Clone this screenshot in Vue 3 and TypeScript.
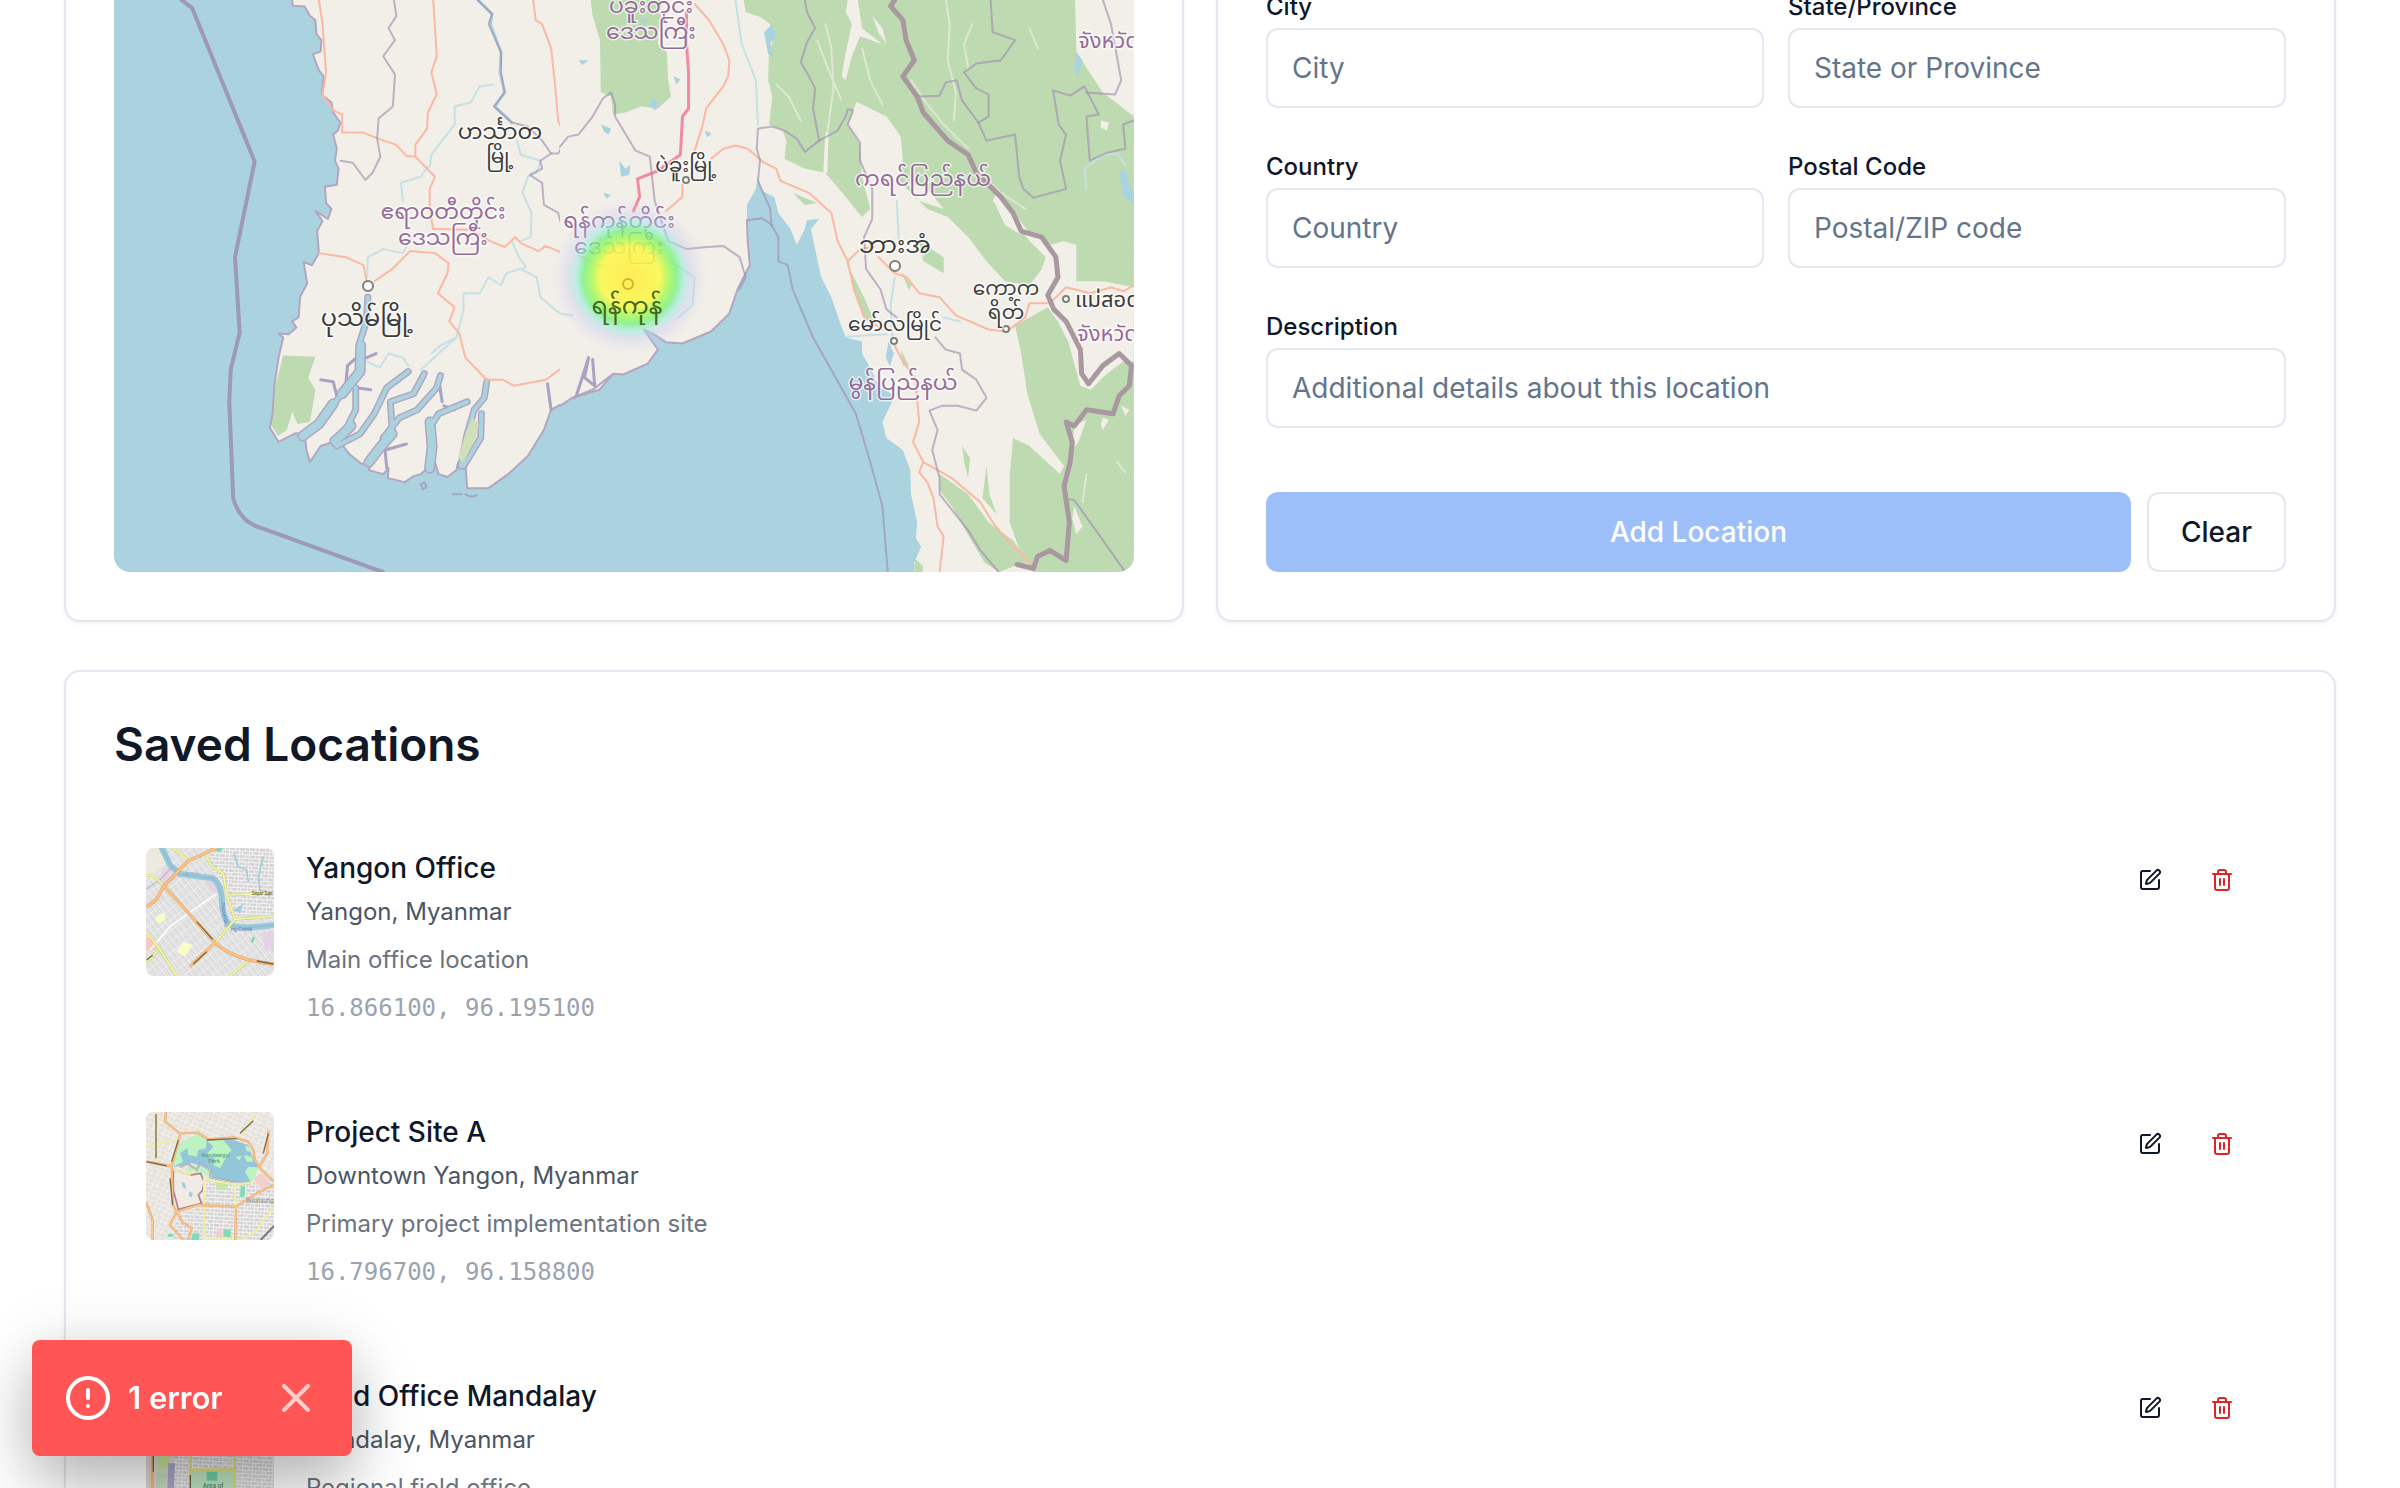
<script setup lang="ts">
import { ref } from 'vue'

interface Shape {
  d: string
  fill?: string
  stroke?: string
  width?: number
}

interface ThumbLabel {
  x: number
  y: number
  size: number
  color: string
  text: string
  turn?: number
}

interface SavedLocation {
  id: number
  name: string
  address: string
  description: string
  lat: number
  lng: number
  viewBox: string
  base: string
  shapes: Shape[]
  labels: ThumbLabel[]
}

interface MapLabel {
  x: number
  y: number
  text: string
  kind: 'region' | 'town'
  size: number
  start?: boolean
}

const form = ref({ city: '', state: '', country: '', postal: '', description: '' })
const toastOpen = ref(true)

const coastWest =
  'M650,0 652,14 685,16 700,40 715,50 718,85 732,100 730,128 708,135 725,175 738,190 733,235 760,255 765,280 785,305 778,325 765,335 775,370 770,400 780,420 775,460 742,465 745,505 760,520 750,545 715,525 735,550 720,575 725,630 705,660 682,652 692,705 672,740 668,790 650,800 662,815 640,832 612,830 625,840 612,890 600,960 595,1030 588,1065 612,1100 660,1078 685,1080 690,1120 700,1150 730,1110 780,1095 810,1130 845,1155 870,1150 865,1170 905,1180 920,1165 918,1190 965,1200 990,1185 1010,1180 1030,1165 1030,1130 1050,1150 1060,1180 1085,1187 1110,1170 1115,1150 1135,1150 1140,1215 1200,1215 1255,1180 1310,1135 1355,1070 1375,1020 1435,990 1510,970 1550,930'
const coastEast =
  'M0,1010 30,990 80,970 131,930 155,932 215,905 240,870 205,820 235,835 260,852 300,855 370,825 415,780 435,720 465,660 460,600 458,550'
const gulfShore =
  ' L458,510 480,470 485,440 495,475 525,490 535,530 565,570 580,610 600,570 605,548 635,545 615,570 625,620 640,690 665,740 685,800 700,840 740,850 740,880 760,915 780,960 820,985 790,1050 800,1090 840,1120 858,1170 860,1230 875,1300 872,1340 885,1360 868,1400 868,1424'

const channels = [
  'M862,740 858,800 840,850 845,920 780,990 725,1055 690,1078',
  'M828,965 828,1020 800,1070 765,1095',
  'M975,925 915,965 880,1030 840,1080 775,1110',
  'M1020,930 990,980 925,1000 930,1070 865,1155',
  'M1065,935 1055,965 1000,1020 950,1040 905,1090',
  'M1140,1000 1060,1030 1032,1070 1040,1110 1035,1170',
  'M1195,950 1188,990 1160,1020 1140,1080 1122,1160',
  'M1180,1030 1178,1090 1130,1160',
]
const estuaries = [
  'M842,860 840,925 790,980',
  'M765,1005 725,1055 680,1085',
  'M930,1080 895,1115 865,1150',
  'M1036,1050 1042,1110 1035,1165',
  'M815,1060 770,1098',
]
const creeks = [
  'M1365,955 1375,1020',
  'M1475,900 1455,960 1440,990',
  'M1490,895 1490,930 1470,980',
  'M970,1105 910,1120 915,1165',
  'M730,945 765,950 775,985 800,960 805,910 830,890',
  'M845,895 885,880M830,965 870,970M1075,1010 1105,1020M1060,940 1070,1000',
]

const westRoads = [
  'M725,0 735,60 745,180 735,235 765,275 790,285 790,330 850,330 890,345 940,360 970,388 995,390 1050,440 1035,470 1035,520 1045,570',
  'M1045,0 1050,70 1055,140 1040,180 1055,235 1030,280 1028,320 995,360 995,390',
  'M1325,0 1332,50 1350,60 1375,120 1385,200 1395,300 1425,360 1430,395 1460,430 1490,465 1490,520',
  'M725,630 800,640 850,660 858,700',
  'M880,700 930,670 980,625 1050,630 1088,655 1085,680 1058,730 1105,765 1090,800 1118,830 1135,890 1195,945 1240,945 1270,960 1360,945 1430,900 1510,875',
  'M1045,570 1150,572 1205,600 1245,615 1275,590 1290,605 1340,625 1360,612 1420,635 1460,635',
]
const eastRoads = [
  'M330,10 365,50 400,110 415,150 412,190 400,215 358,270 350,310 330,375',
  'M370,395 400,370 430,362 460,370 500,405 530,420 540,450 610,480 665,530 680,600 705,650 720,720 745,790 790,820',
  'M705,650 735,620 770,615',
  'M780,640 820,680 850,690 880,730 930,740 970,785 1050,820 1095,825 1140,790 1150,755 1200,755 1240,715 1300,730 1350,715 1380,725 1406,710',
  'M820,860 840,900 870,940 880,1050 865,1100 890,1150 960,1190 1030,1250 1060,1300 1100,1350 1165,1415',
  'M890,1150 880,1175 900,1200 915,1240 925,1310 940,1335 930,1424',
  'M300,460 300,490 260,525',
  'M45,635 105,665',
]
const westBorders = [
  'M935,0 942,40 920,70 938,100 905,140 938,185 932,265 892,295 888,345 897,390 875,430 855,448 820,405 785,400',
  'M1170,0 1210,35 1200,60 1235,130 1235,180 1245,230 1215,265 1265,305 1310,315 1350,350 1375,382 1395,382 1420,345 1460,330 1490,290 1520,240 1545,235 1560,280',
  'M1375,382 1345,400 1350,420 1315,435 1350,455 1355,510 1395,530 1410,580 1430,650 1425,690 1445,730 1420,770 1440,830 1420,860 1470,890 1550,925',
]
const westRivers = [
  'M1170,0 1210,35 1205,60 1235,130 1232,180 1245,230 1218,265 1265,305',
]
const westStreams = [
  'M1280,350 1290,385 1345,400 1335,430 1310,440 1295,480 1320,530 1318,590 1290,600',
  'M1265,600 1285,640 1305,665 1250,680 1235,710 1200,690 1175,730 1130,730 1130,770 1110,840 1060,880 1010,920',
  'M1215,210 1175,215 1150,255 1105,265 1105,310 1070,350 1040,385 1035,415',
  'M960,500 955,455 1010,440 1030,415',
  'M860,690 862,640 905,620 960,630 985,590',
  'M860,900 895,915 920,880 960,890 975,910',
  'M1290,670 1335,690 1345,740 1400,780 1440,790',
  'M1110,840 1065,860 1040,880',
]
const eastBorders = [
  'M600,0 605,30 625,70 605,105 590,155 610,190 625,220 620,270 635,350 600,378 580,345 550,325 520,315 485,320 482,370 490,400 485,450 515,520 518,560 535,590 535,650 558,660 570,720 620,840 725,1030 760,1150 790,1260 803,1424',
  'M458,548 495,543 520,560',
  'M635,350 680,325 700,290 705,272 718,275 705,310 735,355 735,400 765,470 765,545 745,590 750,670 785,720 800,770 825,790',
  'M920,840 945,870 980,880 985,920 1020,945 1045,990 1020,1022 975,1010 935,1010 905,1022 925,1070 912,1120 930,1190 930,1230 1000,1320 1030,1370 1075,1424',
  'M1055,0 1060,80 1115,100 1080,150 1020,158 990,180 1020,220 1050,235 1050,290 1025,305 985,250 972,200 945,205 930,238 880,240',
  'M1025,305 1045,350 1115,335 1125,440 1135,470 1160,492 1240,470 1225,400 1240,335 1222,310 1208,225 1250,238 1285,215 1320,285 1290,290 1298,400 1340,380 1385,370 1380,310 1406,300',
  'M1330,0 1350,60 1375,200 1360,235 1290,230',
  'M1235,1240 1260,1245 1320,1330 1385,1424',
  'M0,365 20,340 45,335 80,290 105,245 125,230 135,260 135,290 185,375 220,390 232,500 265,600 310,620 360,615 400,612 440,640 455,690 440,720',
]
const frontier =
  'M820,0 810,15 840,50 848,100 868,150 840,190 875,240 890,280 950,350 1000,385 1020,430 1080,490 1110,530 1130,575 1180,590 1215,640 1220,690 1195,735 1210,770 1240,800 1275,870 1278,930 1295,955 1330,910 1370,880 1400,910 1395,960 1370,985 1355,1030 1290,1020 1260,1060 1240,1050 1255,1100 1250,1150 1235,1210 1248,1300 1240,1395 1200,1370 1170,1385 1160,1415 1120,1405'
const eastForest = [
  'M75,0 80,40 98,100 100,230 125,240 130,285 160,280 200,265 240,270 272,240 265,200 262,130 240,110 250,0Z',
  'M450,0 455,30 490,42 515,60 525,90 512,130 510,200 520,240 512,310 545,325 555,350 550,395 600,420 650,430 700,490 740,540 760,520 740,440 735,360 705,310 730,245 720,250 800,290 835,340 840,400 830,450 880,500 900,520 950,540 1000,590 1045,650 1090,700 1150,710 1180,670 1190,640 1150,600 1120,560 1060,500 1070,480 1120,540 1150,580 1200,610 1235,600 1265,610 1265,700 1330,700 1406,715 1406,290 1330,230 1265,130 1262,0Z',
  'M1115,810 1195,765 1220,800 1245,850 1275,960 1300,970 1340,930 1380,900 1406,900 1406,1424 1160,1424 1130,1380 1102,1300 1102,1180 1110,1090 1150,1110 1225,1180 1235,1160 1175,1080 1145,980 1130,880Z',
  'M930,1180 1000,1230 1050,1300 1110,1345 1150,1400 1110,1410 1075,1424 1040,1400 1005,1340 960,1260 930,1220Z',
  'M985,1110 1005,1140 1000,1190 990,1150Z',
  'M1045,1160 1052,1230 1070,1280 1035,1240Z',
  'M700,650 745,740 770,800 745,790 725,730Z',
  'M835,870 855,910 840,910Z',
  'M880,600 940,640 940,680 890,650Z',
  'M835,675 862,710 855,722Z',
  'M870,1390 890,1410 888,1424 868,1424Z',
  'M570,480 630,505 600,510Z',
]
const clearings = [
  'M700,30 715,60 700,130 690,190 700,200 715,140 735,90 790,110 740,70 730,0 705,0Z',
  'M765,40 790,70 800,110 780,80Z',
  'M1268,20 1290,60 1290,120 1340,180 1370,215 1406,285 1406,0 1262,0Z',
  'M1330,1040 1345,1045 1330,1070 1325,1055Z',
  'M1375,1010 1395,1020 1385,1035Z',
  'M1260,1260 1280,1310 1265,1330 1255,1290Z',
  'M1325,300 1345,305 1340,325 1325,318Z',
  'M1260,1060 1290,1045 1270,1100 1255,1120Z',
  'M650,330 658,330 655,430 645,430Z',
  'M850,455 900,470 940,520 880,500Z',
  'M1065,505 1110,545 1130,585 1090,560Z',
]
const valleys = [
  'M945,0 955,60 950,150 970,230 965,300',
  'M650,60 665,120 670,220 655,330',
  'M630,100 660,180 690,250',
  'M860,200 900,260 940,310 1000,370',
  'M740,120 760,200 790,260',
  'M530,210 560,240 590,300',
  'M1010,60 990,110 1000,170',
  'M1020,420 1080,480 1140,520',
  'M1150,70 1170,120',
  'M1290,1180 1280,1250',
  'M1365,1150 1385,1175',
]
const ponds = [
  'M145,400 160,420 172,410 170,435 150,440Z',
  'M105,480 125,485 115,495Z',
  'M100,310 125,320 120,335 108,328Z',
  'M225,240 240,255 235,275 220,265Z',
  'M500,80 520,60 530,95 515,105 522,140 510,135Z',
  'M45,150 70,150 55,162Z',
  'M278,190 295,198 285,210Z',
  'M195,45 215,50 205,62Z',
  'M355,325 372,332 360,342Z',
  'M1265,130 1280,150 1268,195 1260,170Z',
  'M1370,430 1385,420 1395,460 1406,480 1406,508 1380,490Z',
  'M805,850 818,880 808,912 798,890Z',
]

const mapLabels: MapLabel[] = [
  { x: 651, y: 13, text: 'ပဲခူးတိုင်း', kind: 'region', size: 22 },
  { x: 651, y: 39, text: 'ဒေသကြီး', kind: 'region', size: 22 },
  { x: 500, y: 139, text: 'ဟင်္သာတ', kind: 'town', size: 22 },
  { x: 500, y: 163, text: 'မြို့', kind: 'town', size: 20 },
  { x: 443, y: 219, text: 'ဧရာဝတီတိုင်း', kind: 'region', size: 22 },
  { x: 443, y: 245, text: 'ဒေသကြီး', kind: 'region', size: 22 },
  { x: 619, y: 228, text: 'ရန်ကုန်တိုင်း', kind: 'region', size: 22 },
  { x: 619, y: 254, text: 'ဒေသကြီး', kind: 'region', size: 22 },
  { x: 367, y: 326, text: 'ပုသိမ်မြို့', kind: 'town', size: 24 },
  { x: 686, y: 172, text: 'ပဲခူးမြို့', kind: 'town', size: 20 },
  { x: 923, y: 186, text: 'ကရင်ပြည်နယ်', kind: 'region', size: 22 },
  { x: 895, y: 253, text: 'ဘားအံ', kind: 'town', size: 24 },
  { x: 1006, y: 295, text: 'ကော့က', kind: 'town', size: 20 },
  { x: 1006, y: 319, text: 'ရိတ်', kind: 'town', size: 20 },
  { x: 1075, y: 307, text: 'แม่สอด', kind: 'town', size: 22, start: true },
  { x: 1078, y: 48, text: 'จังหวัด', kind: 'region', size: 22, start: true },
  { x: 1077, y: 341, text: 'จังหวัด', kind: 'region', size: 22, start: true },
  { x: 895, y: 331, text: 'မော်လမြိုင်', kind: 'town', size: 20 },
  { x: 903, y: 390, text: 'မွန်ပြည်နယ်', kind: 'region', size: 22 },
]
const towns = [
  [368, 286, 5],
  [686, 180, 3],
  [895, 266, 5],
  [1006, 329, 3],
  [1066, 299, 3],
  [894, 341, 3],
]

const locations: SavedLocation[] = [
  {
    id: 1,
    name: 'Yangon Office',
    address: 'Yangon, Myanmar',
    description: 'Main office location',
    lat: 16.8661,
    lng: 96.1951,
    viewBox: '48 54 384 384',
    base: 'url(#streets-diagonal)',
    shapes: [
      { d: 'M48,54 90,54 110,100 48,150Z', fill: '#ece9df' },
      { d: 'M240,54 432,54 432,260 310,270 285,160 240,110Z', fill: 'url(#streets-straight)' },
      { d: 'M225,150 265,160 260,195 240,180Z', fill: '#e5d3e5' },
      { d: 'M100,110 130,120 150,140 110,165 90,150Z', fill: '#e6d4e2' },
      { d: 'M395,310 432,300 432,365 405,360Z', fill: '#e5d3e5' },
      { d: 'M48,318 78,340 78,360 48,362Z', fill: '#f7c9c4' },
      { d: 'M140,365 160,335 188,345 165,380Z', fill: '#fbfdc6' },
      { d: 'M75,262 102,248 106,270 85,282Z', fill: '#fbfdc6' },
      { d: 'M258,54 278,54 275,64 262,66Z', fill: '#7fdcb8' },
      { d: 'M362,335 368,320 375,322 370,340Z', fill: '#7fd8b4' },
      { d: 'M310,240 340,222 330,250Z', fill: '#a0cede' },
      { d: 'M312,70 325,110 350,120 355,155M400,80 385,140 390,180 420,200', stroke: '#a0cede', width: 5 },
      { d: 'M60,360 120,290 260,190', stroke: '#ffffff', width: 5 },
      { d: 'M92,46 120,105 150,132 250,145 Q276,165 276,220 Q278,262 300,285 Q330,300 440,284', stroke: '#97c9da', width: 18 },
      { d: 'M92,46 120,105 150,132 250,145 Q276,165 276,220 Q278,262 300,285 Q330,300 440,284', stroke: '#8491bf', width: 1 },
      { d: 'M48,178 90,150 125,112', stroke: '#8b8fb5', width: 2 },
      { d: 'M48,135 72,138 102,168M130,54 175,92M228,76 245,110 280,130 290,195 315,268 432,258M290,195 432,188M48,305 85,352 140,438M48,400 85,360M315,268 258,335M300,438 355,392', stroke: '#c8cc72', width: 8 },
      { d: 'M48,135 72,138 102,168M130,54 175,92M228,76 245,110 280,130 290,195 315,268 432,258M290,195 432,188M48,305 85,352 140,438M48,400 85,360M315,268 258,335M300,438 355,392', stroke: '#f5f8a6', width: 5 },
      { d: 'M260,54 175,92 102,168 80,208 48,232M102,168 255,338 Q310,390 432,402M255,338 180,410', stroke: '#dca05e', width: 10 },
      { d: 'M260,54 175,92 102,168 80,208 48,232M102,168 255,338 Q310,390 432,402M255,338 180,410', stroke: '#fbc288', width: 7 },
      { d: 'M200,275 248,328M190,402 230,365M380,393 430,402M50,390 68,376', stroke: '#7d6440', width: 4 },
    ],
    labels: [
      { x: 365, y: 195, size: 13, color: '#5a5630', text: 'Sayar San' },
      { x: 165, y: 132, size: 14, color: '#a98ab5', text: 'မြို့နယ်' },
      { x: 302, y: 302, size: 15, color: '#6d86bd', text: 'ng Creek' },
      { x: 274, y: 220, size: 15, color: '#6d86bd', text: 'Pazundau', turn: 82 },
    ],
  },
  {
    id: 2,
    name: 'Project Site A',
    address: 'Downtown Yangon, Myanmar',
    description: 'Primary project implementation site',
    lat: 16.7967,
    lng: 96.1588,
    viewBox: '48 66 384 384',
    base: 'url(#streets-loose)',
    shapes: [
      { d: 'M225,270 432,270 432,450 130,450 140,380 225,345Z', fill: 'url(#streets-straight)' },
      { d: 'M150,160 205,132 235,150 310,150 355,165 365,195 385,230 360,275 320,280 245,262 240,235 185,220 130,232 140,180Z', fill: '#93c6d8' },
      { d: 'M150,160 200,132 230,145 228,175 205,180 200,200 175,195 172,175 150,190 160,215 130,230 140,180Z', fill: '#bdf2c2' },
      { d: 'M228,150 280,150 305,180 290,200 270,235 250,225 255,205 228,195 250,170Z', fill: '#bdf2c2' },
      { d: 'M345,165 362,175 360,185 348,182ZM342,195 365,200 370,215 350,215ZM315,200 335,198 328,212ZM355,230 385,232 375,265 362,275 345,245Z', fill: '#bdf2c2' },
      { d: 'M170,232 195,225 240,240 238,262 220,250 180,255Z', fill: '#bdf2c2' },
      { d: 'M130,240 185,255 212,250 222,275 218,300 205,315 215,340 145,358 130,300Z', fill: '#f1ebe6', stroke: '#b57f8e', width: 5 },
      { d: 'M155,275 165,280 168,298 157,290ZM178,305 188,308 186,322 176,318Z', fill: '#a0cede' },
      { d: 'M255,275 295,282 290,298 262,302Z', fill: '#c6e6a6' },
      { d: 'M332,290 345,288 345,318 330,322ZM188,430 208,430 208,450 184,450ZM112,432 130,432 132,440 115,440ZM280,418 302,420 302,440 280,440Z', fill: '#7fdcb4' },
      { d: 'M372,262 395,250 418,275 405,295 380,285Z', fill: '#f5cfc9' },
      { d: 'M262,415 275,415 275,440 258,445Z', fill: '#f5cfc9' },
      { d: 'M150,232 175,222 200,240 210,222 240,240 240,262 310,278 360,282', stroke: '#8d86a0', width: 5 },
      { d: 'M150,232 175,222 200,240 210,222 240,240 240,262 310,278 360,282', stroke: '#ffffff', width: 2 },
      { d: 'M80,66 80,220M48,168 148,148M222,260 222,450M130,240 180,252 195,240M225,268 310,282 370,280M310,282 318,350M432,350 380,420 340,448 225,448M375,75 335,130', stroke: '#eef0a0', width: 6 },
      { d: 'M108,66 105,95 150,130 205,128 235,148 310,142 355,155 370,180 375,210 390,235 432,275M415,120 412,190 388,230M48,215 125,228 128,340 140,370M150,135 125,228M430,285 380,310 318,350 205,345 140,365 120,405 160,450M318,350 316,450M48,335 68,390 68,450M140,365 160,400 185,415 175,450', stroke: '#e5a468', width: 7 },
      { d: 'M108,66 105,95 150,130 205,128 235,148 310,142 355,155 370,180 375,210 390,235 432,275M415,120 412,190 388,230M48,215 125,228 128,340 140,370M150,135 125,228M430,285 380,310 318,350 205,345 140,365 120,405 160,450M318,350 316,450M48,335 68,390 68,450M140,365 160,400 185,415 175,450', stroke: '#fbc791', width: 4 },
      { d: 'M78,72 78,205M120,265 128,345M230,150 320,146M330,130 370,92M400,190 415,130M50,215 110,228M125,215 145,150', stroke: '#7d6b45', width: 4 },
      { d: 'M392,450 432,408', stroke: '#77777f', width: 6 },
    ],
    labels: [
      { x: 215, y: 200, size: 16, color: '#4f9a76', text: 'Kandawgyi' },
      { x: 235, y: 218, size: 16, color: '#4f9a76', text: 'Park' },
      { x: 348, y: 340, size: 17, color: '#8f8f8f', text: 'Botataung' },
    ],
  },
  {
    id: 3,
    name: 'Field Office Mandalay',
    address: 'Mandalay, Myanmar',
    description: 'Regional field office',
    lat: 21.9588,
    lng: 96.0891,
    viewBox: '438 198 384 384',
    base: 'url(#streets-straight)',
    shapes: [
      { d: 'M438,198 520,198 520,582 438,582Z', fill: '#dcd8d4' },
      { d: 'M470,437 510,437 505,475 470,480Z', fill: '#c8e6a4' },
      { d: 'M470,485 500,490 490,582 465,582Z', fill: '#c4dcc0' },
      { d: 'M505,460 525,460 520,582 500,582Z', fill: '#a9a8c8' },
      { d: 'M570,482 706,482 706,582 570,582Z', fill: '#bfe6c0' },
      { d: 'M620,485 652,485 652,512 620,512Z', fill: '#6fcfa8' },
      { d: 'M571,198 571,582M704,198 704,582M571,480 704,478', stroke: '#dfe07e', width: 8 },
      { d: 'M457,198 457,582', stroke: '#f2b877', width: 10 },
      { d: 'M460,437 460,485M571,495 571,534', stroke: '#6e6038', width: 4 },
    ],
    labels: [{ x: 608, y: 535, size: 18, color: '#3f8060', text: 'Area of' }],
  },
]

const coordinates = (l: SavedLocation): string => `${l.lat.toFixed(6)}, ${l.lng.toFixed(6)}`
</script>

<template>
  <div class="page">
    <div class="columns">
      <section class="card card-open" aria-label="Map">
        <svg class="map" viewBox="114 0 1020 572" role="img" aria-label="Map of Lower Myanmar">
          <defs>
            <radialGradient id="heat">
              <stop offset="0" stop-color="#ffec45" stop-opacity=".9" />
              <stop offset=".38" stop-color="#fcf84c" stop-opacity=".88" />
              <stop offset=".5" stop-color="#a8f95c" stop-opacity=".86" />
              <stop offset=".6" stop-color="#78f27c" stop-opacity=".78" />
              <stop offset=".7" stop-color="#9cebe0" stop-opacity=".6" />
              <stop offset=".8" stop-color="#c4c8ee" stop-opacity=".35" />
              <stop offset="1" stop-color="#d0d0f0" stop-opacity="0" />
            </radialGradient>
          </defs>
          <rect x="114" y="0" width="1020" height="572" fill="#aad3df" />

          <g transform="translate(60 0) scale(.35714 .40179)" class="lines">
            <path :d="coastWest + ' L1568,930 1568,0Z'" fill="#f2efe9" />
            <path d="M625,885 715,888 695,940 715,970 700,1050 665,1055 650,1025 635,1070 610,1085 590,1055 600,970Z" fill="#bddab1" />
            <path v-for="d in westStreams" :key="d" :d="d" class="stream" />
            <path v-for="d in westRivers" :key="d" :d="d" class="river" />
            <path :d="coastWest" class="coast" />
            <path v-for="d in creeks" :key="d" :d="d" class="creek" />
            <path v-for="d in channels" :key="'e' + d" :d="d" class="channel-edge" />
            <path v-for="d in estuaries" :key="'s' + d" :d="d" class="estuary-edge" />
            <path v-for="d in channels" :key="'c' + d" :d="d" class="channel" />
            <path v-for="d in estuaries" :key="'w' + d" :d="d" class="estuary" />
            <path d="M1155,1040 1172,1055 1165,1090 1130,1150 1115,1140 1135,1080Z" fill="#cfdfb8" />
            <path v-for="d in westRoads" :key="d" :d="d" class="road" />
            <path v-for="d in westBorders" :key="d" :d="d" class="border" />
            <path d="M1100,1230h25M1135,1230q15,10 32,2M1010,1205l12,-4 4,12 -10,5z" class="border" />
            <path d="M340,0 370,20 545,402 490,640 503,828 478,920 474,1000 485,1240Q500,1290 545,1308L905,1424" class="maritime" />
          </g>

          <g transform="translate(560 0) scale(.40816 .40179)" class="lines">
            <path :d="coastEast + gulfShore + ' L1406,1424 1406,0 0,0Z'" fill="#f2efe9" />
            <path v-for="d in eastForest" :key="d" :d="d" fill="#bddab1" />
            <path v-for="d in clearings" :key="d" :d="d" fill="#f2efe9" />
            <path v-for="d in valleys" :key="d" :d="d" class="valley" />
            <path v-for="d in ponds" :key="d" :d="d" fill="#aad3df" />
            <path d="M430,0 445,110 480,200 485,310M825,500 830,600M1290,470 1285,420 1330,385 1365,382 1385,410M820,690 810,760 815,850M700,838 800,832M940,790 980,800" class="stream" />
            <path d="M255,640 330,690 325,760 290,790M0,780 30,785" class="stream" />
            <path :d="coastEast" class="coast" />
            <path d="M40,985 70,890 60,940 85,960 80,895" class="creek" />
            <path v-for="d in eastRoads" :key="d" :d="d" class="road" />
            <path d="M310,30 310,110 315,180 315,270 300,290 295,385 240,425 190,445 195,490 180,525" class="motorway" />
            <path v-for="d in eastBorders" :key="d" :d="d" class="border" />
            <path :d="frontier" class="frontier" />
          </g>

          <circle v-for="(t, i) in towns" :key="i" :cx="t[0]" :cy="t[1]" :r="t[2]" class="town-dot" />
          <text
            v-for="(l, i) in mapLabels"
            :key="i"
            :x="l.x"
            :y="l.y"
            :font-size="l.size"
            :text-anchor="l.start ? 'start' : 'middle'"
            :class="['map-label', l.kind]"
          >{{ l.text }}</text>
          <circle cx="630" cy="277" r="78" fill="url(#heat)" />
          <circle cx="628" cy="284" r="5" class="hot-dot" />
          <text x="627" y="314" font-size="24" text-anchor="middle" class="map-label hot">ရန်ကုန်</text>
        </svg>
      </section>

      <section class="card card-open" aria-label="Add location">
        <form class="form" @submit.prevent>
          <div class="pair">
            <div class="field">
              <label for="city">City</label>
              <input id="city" v-model="form.city" type="text" placeholder="City" />
            </div>
            <div class="field">
              <label for="state">State/Province</label>
              <input id="state" v-model="form.state" type="text" placeholder="State or Province" />
            </div>
          </div>
          <div class="pair">
            <div class="field">
              <label for="country">Country</label>
              <input id="country" v-model="form.country" type="text" placeholder="Country" />
            </div>
            <div class="field">
              <label for="postal">Postal Code</label>
              <input id="postal" v-model="form.postal" type="text" placeholder="Postal/ZIP code" />
            </div>
          </div>
          <div class="field">
            <label for="description">Description</label>
            <input id="description" v-model="form.description" type="text" placeholder="Additional details about this location" />
          </div>
          <div class="actions">
            <button type="submit" class="btn btn-primary" disabled>Add Location</button>
            <button type="button" class="btn btn-outline">Clear</button>
          </div>
        </form>
      </section>
    </div>

    <section class="card saved">
      <h2>Saved Locations</h2>
      <ul class="list">
        <li v-for="loc in locations" :key="loc.id" class="item">
          <svg class="thumb" :viewBox="loc.viewBox" aria-hidden="true">
            <rect x="0" y="0" width="900" height="700" fill="#dbdada" />
            <rect x="0" y="0" width="900" height="700" :fill="loc.base" />
            <path
              v-for="(s, i) in loc.shapes"
              :key="i"
              :d="s.d"
              :fill="s.fill ?? 'none'"
              :stroke="s.stroke ?? 'none'"
              :stroke-width="s.width ?? 0"
              stroke-linejoin="round"
            />
            <text
              v-for="t in loc.labels"
              :key="t.text"
              :x="t.x"
              :y="t.y"
              :font-size="t.size"
              :fill="t.color"
              :transform="t.turn ? `rotate(${t.turn} ${t.x} ${t.y})` : undefined"
              class="thumb-label"
            >{{ t.text }}</text>
          </svg>
          <div class="details">
            <h3>{{ loc.name }}</h3>
            <p class="address">{{ loc.address }}</p>
            <p class="note">{{ loc.description }}</p>
            <p class="coords">{{ coordinates(loc) }}</p>
          </div>
          <div class="tools">
            <button type="button" class="icon-btn" :aria-label="`Edit ${loc.name}`">
              <svg viewBox="0 0 24 24" class="icon">
                <path d="M12 3H5a2 2 0 0 0-2 2v14a2 2 0 0 0 2 2h14a2 2 0 0 0 2-2v-7" />
                <path d="M18.375 2.625a1 1 0 0 1 3 3l-9.013 9.014a2 2 0 0 1-.853.505l-2.873.84a.5.5 0 0 1-.62-.62l.84-2.873a2 2 0 0 1 .506-.852z" />
              </svg>
            </button>
            <button type="button" class="icon-btn danger" :aria-label="`Delete ${loc.name}`">
              <svg viewBox="0 0 24 24" class="icon">
                <path d="M3 6h18" />
                <path d="M19 6v14c0 1-1 2-2 2H7c-1 0-2-1-2-2V6" />
                <path d="M8 6V4c0-1 1-2 2-2h4c1 0 2 1 2 2v2" />
                <path d="M10 11v6M14 11v6" />
              </svg>
            </button>
          </div>
        </li>
      </ul>
    </section>

    <svg class="patterns" aria-hidden="true">
      <defs>
        <pattern id="streets-diagonal" width="26" height="16" patternUnits="userSpaceOnUse" patternTransform="rotate(52)">
          <path d="M0 0H26M0 8H26M0 0V16" fill="none" stroke="#f8f8f8" stroke-width="3" />
        </pattern>
        <pattern id="streets-straight" width="30" height="22" patternUnits="userSpaceOnUse" patternTransform="rotate(3)">
          <rect width="30" height="22" fill="#d5d3d3" />
          <path d="M0 1H30M0 12H30M1 0V22M11 0V12M20 12V22" fill="none" stroke="#f6f6f6" stroke-width="3" />
        </pattern>
        <pattern id="streets-loose" width="34" height="30" patternUnits="userSpaceOnUse" patternTransform="rotate(24)">
          <rect width="34" height="30" fill="#e6e2db" />
          <path d="M0 2Q17 12 34 2M8 6V30M24 8L20 30M0 20H34" fill="none" stroke="#fafafa" stroke-width="2" />
        </pattern>
      </defs>
    </svg>

    <div v-if="toastOpen" class="toast" role="alert">
      <svg viewBox="0 0 24 24" class="toast-icon" aria-hidden="true">
        <circle cx="12" cy="12" r="10" />
        <path d="M12 8v4M12 16h.01" />
      </svg>
      <span class="toast-text">1 error</span>
      <button type="button" class="toast-close" aria-label="Dismiss" @click="toastOpen = false">
        <svg viewBox="0 0 24 24" aria-hidden="true"><path d="M18 6L6 18M6 6l12 12" /></svg>
      </button>
    </div>
  </div>
</template>

<style>
html,
body {
  background: #ffffff;
}
body {
  height: 100vh;
  overflow: hidden;
}
</style>

<style scoped>
.page {
  padding: 0 64px 48px;
  font-family: Inter, 'Liberation Sans', sans-serif;
  color: #0f172a;
}
.page *,
.page *::before {
  box-sizing: border-box;
}
.columns {
  display: grid;
  grid-template-columns: 1fr 1fr;
  gap: 32px;
}
.card {
  border: 2px solid #e2e8f0;
  border-radius: 16px;
  padding: 48px;
  background: #ffffff;
  box-shadow: 0 2px 4px rgba(0, 0, 0, 0.05);
}
.card-open {
  border-top: 0;
  border-top-left-radius: 0;
  border-top-right-radius: 0;
  padding-top: 0;
}
.map {
  display: block;
  width: 100%;
  border-radius: 0 0 16px 16px;
}
.lines path {
  vector-effect: non-scaling-stroke;
  stroke-linejoin: round;
  stroke-linecap: round;
}
.lines .coast,
.lines .border,
.lines .road,
.lines .motorway,
.lines .river,
.lines .stream,
.lines .valley,
.lines .creek,
.lines .channel,
.lines .channel-edge,
.lines .estuary,
.lines .estuary-edge,
.lines .frontier,
.lines .maritime {
  fill: none;
}
.coast { stroke: #b3a6c0; stroke-width: 2px; }
.border { stroke: #a28fb0; stroke-opacity: 0.65; stroke-width: 2px; }
.road { stroke: #fbb8a2; stroke-width: 2px; }
.motorway { stroke: #f08ba2; stroke-width: 3px; }
.river { stroke: #a6d1de; stroke-width: 3px; }
.stream { stroke: #c6e0e6; stroke-width: 2px; }
.valley { stroke: #dfe6d2; stroke-width: 2px; }
.creek { stroke: #a9a2c0; stroke-width: 3px; }
.channel-edge { stroke: #b0a6c2; stroke-width: 7px; }
.channel { stroke: #aad3df; stroke-width: 4px; }
.estuary-edge { stroke: #b0a6c2; stroke-width: 11px; }
.estuary { stroke: #aad3df; stroke-width: 8px; }
.frontier { stroke: #a8989f; stroke-width: 5px; }
.maritime { stroke: #9d99b6; stroke-width: 4px; }
.town-dot {
  fill: #ffffff;
  stroke: #7c8078;
  stroke-width: 2px;
}
.hot-dot {
  fill: none;
  stroke: #cdb52f;
  stroke-width: 2px;
}
.map-label {
  font-family: 'Noto Sans Myanmar', 'Noto Sans Thai', 'Noto Sans', 'DejaVu Sans', sans-serif;
  stroke: #ffffff;
  stroke-opacity: 0.7;
  stroke-width: 3px;
  paint-order: stroke;
}
.region { fill: #956c96; }
.town { fill: #3c3c3c; }
.hot {
  fill: #45661f;
  stroke: none;
}

.form {
  display: flex;
  flex-direction: column;
  gap: 40px;
  margin-top: -12px;
}
.pair {
  display: grid;
  grid-template-columns: 1fr 1fr;
  gap: 24px;
}
.field {
  display: flex;
  flex-direction: column;
  gap: 2px;
}
.field label {
  font-size: 24px;
  line-height: 38px;
  font-weight: 500;
}
.field input {
  width: 100%;
  height: 80px;
  padding: 0 24px;
  border: 2px solid #e2e8f0;
  border-radius: 12px;
  background: #ffffff;
  font: inherit;
  font-size: 28px;
  color: inherit;
}
.field input::placeholder {
  color: #64748b;
  opacity: 1;
}
.actions {
  display: flex;
  gap: 16px;
  padding-top: 24px;
}
.btn {
  height: 80px;
  padding: 0 32px;
  border-radius: 12px;
  font: inherit;
  font-size: 28px;
  font-weight: 500;
}
.btn-primary {
  flex: 1;
  border: 0;
  background: #9dc0fa;
  color: #ffffff;
}
.btn-outline {
  border: 2px solid #e2e8f0;
  background: #ffffff;
  color: #0f172a;
}

.saved {
  margin-top: 48px;
}
.saved h2 {
  margin: 0;
  font-size: 46px;
  line-height: 48px;
  font-weight: 600;
  color: #111827;
}
.list {
  display: flex;
  flex-direction: column;
  gap: 24px;
  margin: 48px 0 0;
  padding: 0;
  list-style: none;
}
.item {
  display: flex;
  align-items: flex-start;
  gap: 32px;
  padding: 32px;
}
.thumb {
  flex: none;
  width: 128px;
  height: 128px;
  border-radius: 8px;
}
.thumb-label {
  font-family: Inter, 'Noto Sans', sans-serif;
  font-weight: 500;
}
.details {
  flex: 1;
  font-size: 24px;
  line-height: 32px;
}
.details h3,
.details p {
  margin: 0;
}
.details h3 {
  font-size: 28px;
  line-height: 40px;
  font-weight: 500;
}
.details .address {
  margin-top: 8px;
  color: #4b5563;
}
.details .note {
  margin-top: 16px;
  color: #6b7280;
}
.details .coords {
  margin-top: 16px;
  font-family: 'DejaVu Sans Mono', 'Liberation Mono', monospace;
  color: #9ca3af;
}
.tools {
  display: flex;
  gap: 8px;
}
.icon-btn {
  display: grid;
  place-items: center;
  width: 64px;
  height: 64px;
  padding: 0;
  border: 0;
  background: none;
  color: #0f172a;
}
.danger {
  color: #dc2626;
}
.icon {
  width: 24px;
  height: 24px;
  fill: none;
  stroke: currentColor;
  stroke-width: 2px;
  stroke-linecap: round;
  stroke-linejoin: round;
}
.patterns {
  position: absolute;
  width: 0;
  height: 0;
}

.toast {
  position: fixed;
  left: 32px;
  bottom: 32px;
  display: flex;
  align-items: center;
  width: 320px;
  height: 116px;
  padding: 0 32px;
  border-radius: 8px;
  background: #ff5555;
  box-shadow: 0 32px 64px rgba(0, 0, 0, 0.25), 0 0 64px rgba(0, 0, 0, 0.1);
  color: #ffffff;
}
.toast-icon {
  width: 48px;
  height: 48px;
  margin-right: 16px;
}
.toast-text {
  flex: 1;
  font-size: 31px;
  line-height: 40px;
  font-weight: 600;
}
.toast svg {
  fill: none;
  stroke: currentColor;
  stroke-width: 2px;
  stroke-linecap: round;
  stroke-linejoin: round;
}
.toast-close {
  width: 48px;
  height: 48px;
  padding: 0;
  border: 0;
  background: none;
  color: #ffffff;
  opacity: 0.7;
}
.toast-close svg {
  display: block;
  width: 48px;
  height: 48px;
}
</style>
